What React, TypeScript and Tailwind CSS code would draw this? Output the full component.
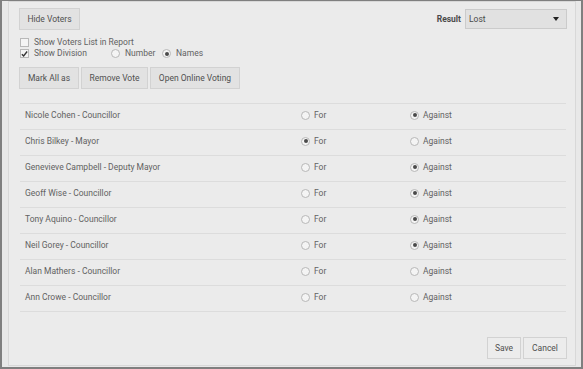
import type { ReactNode } from 'react'

const voters = [
  { name: 'Nicole Cohen - Councillor', vote: 'against' },
  { name: 'Chris Bilkey - Mayor', vote: 'for' },
  { name: 'Genevieve Campbell - Deputy Mayor', vote: 'against' },
  { name: 'Geoff Wise - Councillor', vote: 'against' },
  { name: 'Tony Aquino - Councillor', vote: 'against' },
  { name: 'Neil Gorey - Councillor', vote: 'against' },
  { name: 'Alan Mathers - Councillor', vote: 'none' },
  { name: 'Ann Crowe - Councillor', vote: 'none' },
]

function Radio({ checked }: { checked?: boolean }) {
  return (
    <span className="w-[9px] h-[9px] rounded-full border border-[#b8b8b8] bg-[#f4f4f4] flex items-center justify-center shrink-0">
      {checked && <span className="w-[4px] h-[4px] rounded-full bg-[#4a4a4a]" />}
    </span>
  )
}

function Checkbox({ checked }: { checked?: boolean }) {
  return (
    <span className="w-[9px] h-[9px] border border-[#b8b8b8] bg-[#f4f4f4] flex items-center justify-center shrink-0">
      {checked && (
        <svg width="8" height="8" viewBox="0 0 8 8">
          <path d="M1 4.2 L3 6.2 L7 1.2" stroke="#333" strokeWidth="1.6" fill="none" />
        </svg>
      )}
    </span>
  )
}

function Btn({ children, className = '' }: { children: ReactNode; className?: string }) {
  return (
    <button
      className={`h-[22px] border border-[#d2d2d2] bg-[#e2e2e2] text-[8.5px] text-[#505050] ${className}`}
    >
      {children}
    </button>
  )
}

export default function App() {
  return (
    <div
      className="w-[583px] h-[369px] bg-[#e8e8e8] border-l-2 border-r-2 border-b-2 border-t border-[#7f7f7f] pl-[6px] pr-[5px] pb-[1px] text-[#626262]"
      style={{ fontFamily: 'Roboto, "Liberation Sans", sans-serif' }}
    >
      <div className="h-full border border-[#d8d8d8] bg-[#ebebeb] pt-[6px] pl-[10px] pr-[8px] flex flex-col">
        <div className="flex justify-between items-start">
          <Btn className="w-[61px]">Hide Voters</Btn>
          <div className="flex items-center gap-[4px] mt-[1px]">
            <span className="text-[8.5px] font-bold text-[#4a4a4a]">Result</span>
            <div className="w-[102px] h-[20px] border border-[#cbcbcb] bg-[#e1e1e1] flex items-center justify-between pl-[3px] pr-[7px]">
              <span className="text-[8.5px] text-[#4a4a4a]">Lost</span>
              <svg width="6" height="4" viewBox="0 0 6 4">
                <path d="M0 0 L6 0 L3 4 Z" fill="#222" />
              </svg>
            </div>
          </div>
        </div>

        <div className="mt-[7px] flex flex-col text-[8.5px]">
          <div className="h-[11px] flex items-center gap-[5px] pl-[1px]">
            <Checkbox />
            <span>Show Voters List in Report</span>
          </div>
          <div className="h-[11px] flex items-center pl-[1px]">
            <div className="flex items-center gap-[5px] w-[91px]">
              <Checkbox checked />
              <span>Show Division</span>
            </div>
            <div className="flex items-center gap-[5px] w-[51px]">
              <Radio />
              <span>Number</span>
            </div>
            <div className="flex items-center gap-[5px]">
              <Radio checked />
              <span>Names</span>
            </div>
          </div>
        </div>

        <div className="mt-[8px] flex gap-[2px]">
          <Btn className="w-[60px]">Mark All as</Btn>
          <Btn className="w-[67px]">Remove Vote</Btn>
          <Btn className="w-[90px]">Open Online Voting</Btn>
        </div>

        <div className="mt-[14px] mx-[1px] border-t border-[#dcdcdc]">
          {voters.map((v) => (
            <div
              key={v.name}
              className="h-[26px] pb-[3px] border-b border-[#dcdcdc] flex items-center text-[8.5px]"
            >
              <span className="pl-[5px] w-[281px]">{v.name}</span>
              <div className="flex items-center gap-[4px] w-[109px]">
                <Radio checked={v.vote === 'for'} />
                <span>For</span>
              </div>
              <div className="flex items-center gap-[4px]">
                <Radio checked={v.vote === 'against'} />
                <span>Against</span>
              </div>
            </div>
          ))}
        </div>

        <div className="mt-auto mb-[6px] flex justify-end gap-[2px]">
          <Btn className="w-[34px] bg-[#ececec]">Save</Btn>
          <Btn className="w-[44px] bg-[#ececec]">Cancel</Btn>
        </div>
      </div>
    </div>
  )
}
